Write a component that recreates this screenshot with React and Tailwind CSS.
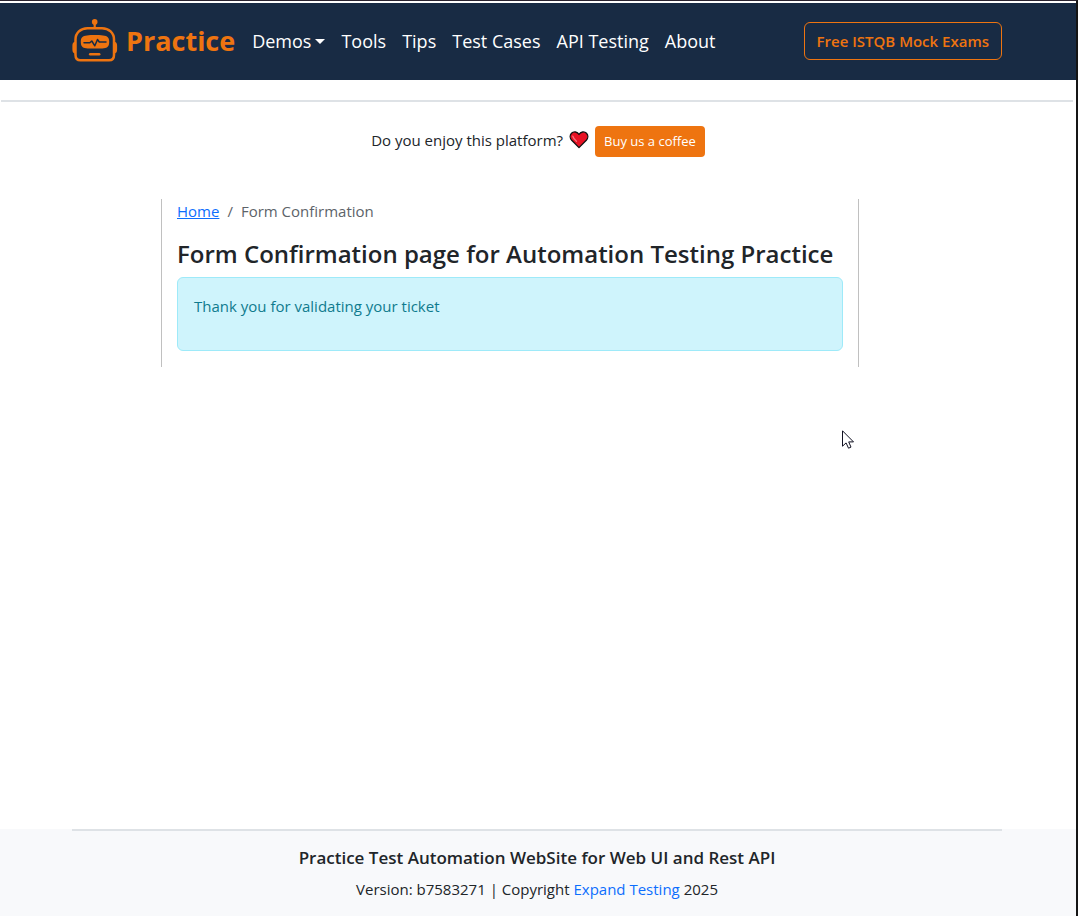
const navItems = ["Tools", "Tips", "Test Cases", "API Testing", "About"];

function RobotLogo() {
  return (
    <svg width="46" height="44" viewBox="0 0 46 44" fill="none" aria-hidden="true" className="shrink-0">
      <circle cx="22.700" cy="2.900" r="2.800" fill="#ee7410" />
      <path d="M22.700 4v5" stroke="#ee7410" strokeWidth="2.200" />
      <path
        d="M15.500 9.200h14.500c7 0 12 4.800 12 11.300v15.500c0 3.500-1.800 5.300-5 5.300H8.500c-3.200 0-5-1.800-5-5.300V20.500c0-6.500 5-11.300 12-11.300z"
        stroke="#ee7410"
        strokeWidth="2.500"
      />
      <path d="M3.700 22.500C1.300 22.800.4 24.200.4 26.800v3.800c0 2.600.9 3.900 3.300 4.300zM41.800 22.500c2.400.3 3.300 1.700 3.300 4.300v3.800c0 2.600-.9 3.900-3.300 4.300z" fill="#ee7410" />
      <path d="M15 16.500c4-.6 11.500-.6 16 0 4.500.2 6.200 2.200 6.200 6.300 0 4.500-1.700 6.300-5.200 6.500-3.500.4-14.500.4-18 0-3.500-.2-5.200-2-5.200-6.500 0-4.100 1.700-6.100 6.200-6.300z" fill="#ee7410" />
      <path d="M12 23.800h5.800l2-1.800 3 4.800 2.700-6.300 1.800 2.500H34" stroke="#182b44" strokeWidth="1.500" strokeLinejoin="round" strokeLinecap="round" />
      <path d="M18.200 35.200h9" stroke="#ee7410" strokeWidth="2.500" strokeLinecap="round" />
    </svg>
  );
}

function Heart() {
  return (
    <svg width="20" height="18" viewBox="0 0 20 18" role="img" aria-label="Heart" className="shrink-0">
      <path
        d="M10 3.500C8.500.5 4.500.2 2.500 2.300.6 4.300.8 7.300 2.700 9.300L10 16.600l7.300-7.300c1.900-2 2.100-5 .2-7C15.500.2 11.500.5 10 3.500z"
        fill="#e81224"
        stroke="#111111"
        strokeWidth="1.300"
        strokeLinejoin="round"
      />
      <path d="M3.800 5.200C4.500 7.500 6 9 7.500 10.300" fill="none" stroke="#f4747e" strokeWidth="1.300" strokeLinecap="round" />
    </svg>
  );
}

function Pointer() {
  return (
    <svg width="14" height="20" viewBox="0 0 14 20" aria-hidden="true" className="pointer-events-none absolute left-[842px] top-[429px]">
      <path d="M.5.8v15.400l3.600-3.300 2.400 5.300 2.500-1.100-2.300-5.200h4.800z" fill="#ffffff" stroke="#111122" strokeWidth="1" />
    </svg>
  );
}

export default function App() {
  return (
    <div className="relative flex min-h-screen flex-col border-r-2 border-t border-r-[#151515] border-t-[#2b2430] bg-white font-['Open_Sans','Noto_Sans',sans-serif] text-[15px] leading-6 text-[#212529]">
      <header className="mt-0.5 bg-[#182b44] pb-[17px] pl-[72px] pr-[74px] pt-4">
        <div className="mx-auto flex max-w-[930px] items-center">
          <a href="#home" className="flex items-center gap-2 text-[27px] font-bold leading-10 text-[#ee7410]">
            <RobotLogo />
            Practice
          </a>
          <nav className="ml-[17px] flex grow items-center gap-4 text-[18px] leading-7 text-white">
            <button type="button" className="flex items-center gap-1">
              Demos
              <svg width="10" height="5" viewBox="0 0 10 5" aria-hidden="true">
                <path d="M0 0h10L5 5z" fill="currentColor" />
              </svg>
            </button>
            {navItems.map((item) => (
              <a key={item} href="#nav" className="whitespace-nowrap">
                {item}
              </a>
            ))}
          </nav>
          <a
            href="#exams"
            className="whitespace-nowrap rounded-md border border-[#ee7410] px-3 py-1.5 text-[15px] font-semibold leading-6 text-[#ee7410]"
          >
            Free ISTQB Mock Exams
          </a>
        </div>
      </header>

      <hr className="ml-px mr-[3px] mt-5 border-t-2 border-[#dee2e6]" />

      <div className="mt-6 flex items-start justify-center gap-1.5">
        <div className="flex items-center gap-1.5 leading-7">
          <span>Do you enjoy this platform?</span>
          <Heart />
        </div>
        <a href="#coffee" className="rounded bg-[#ee7410] px-[9px] py-[5px] text-[13px] leading-[21px] text-white">
          Buy us a coffee
        </a>
      </div>

      <main className="mb-8 mt-[42px] grow pl-[72px] pr-[74px]">
        <div className="mx-auto max-w-[930px] pl-[89px] pr-[143px]">
          <div className="border-x border-[#c0c0c0] px-[15px] pb-4">
            <nav aria-label="Breadcrumb" className="flex gap-2 text-[#5c6369]">
              <a href="#home" className="text-[#0d6efd] underline">
                Home
              </a>
              <span>/</span>
              <span>Form Confirmation</span>
            </nav>
            <h1 className="mt-4 whitespace-nowrap text-[24px] font-semibold leading-[30px]">
              Form Confirmation page for Automation Testing Practice
            </h1>
            <div role="alert" className="mt-2 rounded-md border border-[#9eeaf9] bg-[#cff4fc] px-4 pb-8 pt-4 text-[#0f7b8e]">
              Thank you for validating your ticket
            </div>
          </div>
        </div>
      </main>

      <footer className="bg-[#f8f9fb] pb-[15px] pl-[72px] pr-[74px] text-center">
        <div className="mx-auto max-w-[930px] border-t-2 border-[#dee2e6] pt-[15px]">
          <h2 className="text-[17px] font-semibold leading-6">Practice Test Automation WebSite for Web UI and Rest API</h2>
          <p className="mt-[7px]">
            Version: b7583271 | Copyright{" "}
            <a href="#expand" className="text-[#0d6efd]">
              Expand Testing
            </a>{" "}
            2025
          </p>
        </div>
      </footer>
      <Pointer />
    </div>
  );
}
